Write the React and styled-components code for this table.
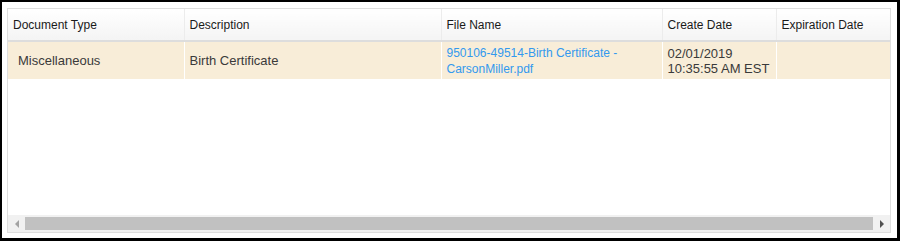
import React from "react";
import styled, { createGlobalStyle } from "styled-components";

const Global = createGlobalStyle`
  html, body { margin: 0; padding: 0; background: #fff; }
  body { font-family: "Liberation Sans", Arial, sans-serif; }
`;

const Frame = styled.div`
  box-sizing: border-box;
  width: 900px;
  height: 241px;
  border-style: solid;
  border-color: #000;
  border-width: 2px 3px 3px 2px;
  padding: 6px 6px 5px 5px;
  background: #fff;
  display: flex;
`;

const Panel = styled.div`
  flex: 1;
  border: 1px solid #dedede;
  display: flex;
  flex-direction: column;
  overflow: hidden;
`;

const Body = styled.div`
  flex: 1;
  overflow: hidden;
`;

const Table = styled.table`
  width: 882px;
  table-layout: fixed;
  border-collapse: collapse;
`;

const HeadCell = styled.th`
  height: 31px;
  padding: 0 0 0 5px;
  text-align: left;
  font-weight: normal;
  font-size: 12px;
  color: #1a1a1a;
  background: linear-gradient(#ffffff, #f4f4f4);
  border-bottom: 2px solid #dddddd;
  border-left: ${(p) => (p.$first ? "none" : "1px solid #ececec")};
  white-space: nowrap;
  overflow: hidden;
  vertical-align: middle;
`;

const Cell = styled.td`
  height: 37px;
  padding: 0 0 0 ${(p) => p.$indent || 5}px;
  font-size: 13px;
  line-height: 15px;
  color: #3a3a3a;
  background: #f8edd8;
  border-left: ${(p) => (p.$first ? "none" : "1px solid #fff")};
  vertical-align: middle;
`;

const FileLink = styled.a`
  display: block;
  font-size: 12px;
  line-height: 16px;
  color: #3399ee;
  text-decoration: none;
  cursor: pointer;
`;

const ScrollBar = styled.div`
  height: 17px;
  display: flex;
  background: #f1f1f1;
`;

const ScrollButton = styled.div`
  width: 17px;
  display: flex;
  align-items: center;
  justify-content: center;
`;

const Track = styled.div`
  flex: 1;
  display: flex;
  padding: 2px 0;
`;

const Thumb = styled.div`
  flex: 1;
  background: #c1c1c1;
`;

const Arrow = ({ dir }) => (
  <svg width="6" height="8" viewBox="0 0 6 8">
    {dir === "left" ? (
      <polygon points="5,0 5,8 1,4" fill="#a3a3a3" />
    ) : (
      <polygon points="1,0 1,8 5,4" fill="#505050" />
    )}
  </svg>
);

const columns = [
  { label: "Document Type", width: 176 },
  { label: "Description", width: 257 },
  { label: "File Name", width: 221 },
  { label: "Create Date", width: 114 },
  { label: "Expiration Date", width: 114 },
];

export default function App() {
  return (
    <>
      <Global />
      <Frame>
        <Panel>
          <Body>
            <Table>
              <colgroup>
                {columns.map((c) => (
                  <col key={c.label} style={{ width: c.width }} />
                ))}
              </colgroup>
              <thead>
                <tr>
                  {columns.map((c, i) => (
                    <HeadCell key={c.label} $first={i === 0}>
                      {c.label}
                    </HeadCell>
                  ))}
                </tr>
              </thead>
              <tbody>
                <tr>
                  <Cell $first $indent={10}>Miscellaneous</Cell>
                  <Cell>Birth Certificate</Cell>
                  <Cell>
                    <FileLink>950106-49514-Birth Certificate - CarsonMiller.pdf</FileLink>
                  </Cell>
                  <Cell>
                    02/01/2019
                    <br />
                    10:35:55 AM EST
                  </Cell>
                  <Cell />
                </tr>
              </tbody>
            </Table>
          </Body>
          <ScrollBar>
            <ScrollButton>
              <Arrow dir="left" />
            </ScrollButton>
            <Track>
              <Thumb />
            </Track>
            <ScrollButton>
              <Arrow dir="right" />
            </ScrollButton>
          </ScrollBar>
        </Panel>
      </Frame>
    </>
  );
}
